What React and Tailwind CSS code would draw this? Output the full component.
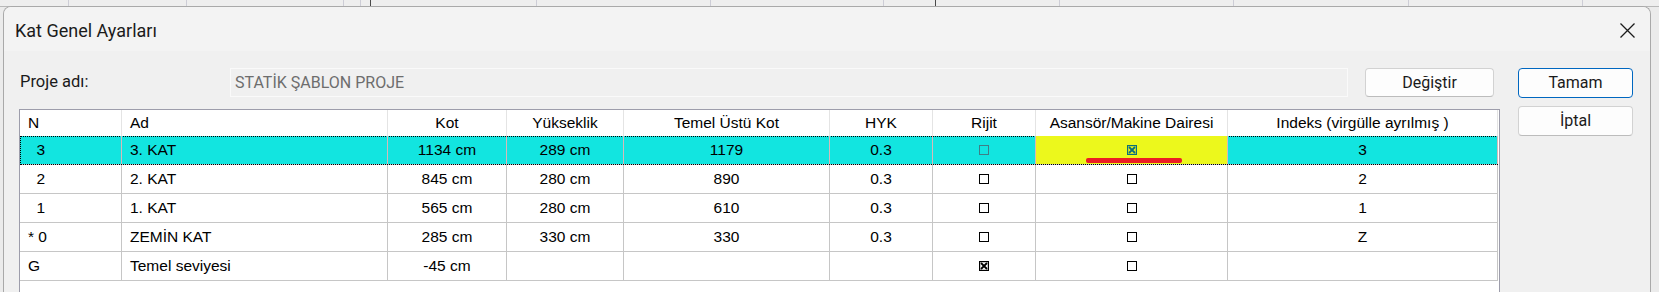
const columns = [
  { key: "n", label: "N", w: "w-[102px]", left: true },
  { key: "ad", label: "Ad", w: "w-[266px]", left: true },
  { key: "kot", label: "Kot", w: "w-[119px]" },
  { key: "yuk", label: "Yükseklik", w: "w-[117px]" },
  { key: "tuk", label: "Temel Üstü Kot", w: "w-[206px]" },
  { key: "hyk", label: "HYK", w: "w-[103px]" },
  { key: "rijit", label: "Rijit", w: "w-[103px]", box: true },
  { key: "asansor", label: "Asansör/Makine Dairesi", w: "w-[192px]", box: true },
  { key: "indeks", label: "Indeks (virgülle ayrılmış )", w: "w-[270px]" },
];

const rows = [
  { n: "  3", ad: "3. KAT", kot: "1134 cm", yuk: "289 cm", tuk: "1179", hyk: "0.3", rijit: false, asansor: true, indeks: "3", selected: true },
  { n: "  2", ad: "2. KAT", kot: "845 cm", yuk: "280 cm", tuk: "890", hyk: "0.3", rijit: false, asansor: false, indeks: "2" },
  { n: "  1", ad: "1. KAT", kot: "565 cm", yuk: "280 cm", tuk: "610", hyk: "0.3", rijit: false, asansor: false, indeks: "1" },
  { n: "* 0", ad: "ZEMİN KAT", kot: "285 cm", yuk: "330 cm", tuk: "330", hyk: "0.3", rijit: false, asansor: false, indeks: "Z" },
  { n: "G", ad: "Temel seviyesi", kot: "-45 cm", yuk: "", tuk: "", hyk: "", rijit: true, asansor: false, indeks: "" },
];

// background window columns peeking above the dialog
const strip = [
  { w: "w-[69px]" },
  { w: "w-[118px]" },
  { w: "w-[157px]" },
  { w: "w-[17px]" },
  { w: "w-[10px]", dark: true },
  { w: "w-[166px]" },
  { w: "w-[174px]" },
  { w: "w-[173px]" },
  { w: "w-[52px]", dark: true },
  { w: "w-[124px]" },
  { w: "w-[174px]" },
  { w: "w-[175px]" },
  { w: "w-[174px]" },
];

function CheckBox({ checked, color = "#000000" }) {
  return (
    <svg width="10" height="10" viewBox="0 0 10 10" className="block">
      <rect x="0.5" y="0.5" width="9" height="9" fill="none" stroke={color} strokeWidth={checked ? 1.4 : 1} />
      {checked && <path d="M2 2 L8 8 M8 2 L2 8" stroke={color} strokeWidth="1.8" />}
    </svg>
  );
}

function Cell({ col, row, header }) {
  if (header) {
    return (
      <div
        className={`${col.w} h-full shrink-0 flex items-center border-r border-[#e4e4e4] ${
          col.left ? "justify-start pl-[8px]" : "justify-center"
        }`}
      >
        {col.label}
      </div>
    );
  }

  const sel = row.selected;
  const yellow = sel && col.key === "asansor";

  return (
    <div
      className={`${col.w} relative h-full shrink-0 flex items-center border-r whitespace-pre ${
        sel ? "border-[#d6b9b9]" : "border-[#c6c6c6]"
      } ${yellow ? "bg-[#ecf81c]" : ""} ${col.left ? "justify-start pl-[8px]" : "justify-center"}`}
    >
      {col.box ? (
        <CheckBox
          checked={row[col.key]}
          color={sel ? (yellow ? "#0d6f7a" : "#3f7f86") : "#000000"}
        />
      ) : (
        row[col.key]
      )}
      {/* red marker under the elevator cell */}
      {yellow && (
        <div className="absolute bottom-[1px] left-[50px] w-[96px] h-[5px] rounded-[2px] bg-[#ec1c24]" />
      )}
    </div>
  );
}

export default function App() {
  return (
    <div className="w-[1659px] h-[292px] overflow-hidden bg-[#ebebeb] flex flex-col font-['Roboto',sans-serif] text-[#1a1a1a]">
      {/* Background strip */}
      <div className="h-[7px] shrink-0 flex border-b border-[#b8b8b8] bg-[#eeeeee]">
        {strip.map((s, i) => (
          <div
            key={i}
            className={`${s.w} h-full shrink-0 border-r ${s.dark ? "border-[#4a4a4a]" : "border-[#cdcdd6]"}`}
          />
        ))}
      </div>

      {/* Dialog */}
      <div className="ml-[3px] w-[1648px] flex-1 min-h-0 flex flex-col rounded-t-[8px] border border-b-0 border-[#a9a9a9] bg-[#f0f0f0] -mt-[1px] overflow-hidden">
        {/* Title bar */}
        <div className="h-[44px] shrink-0 bg-[#f3f3f3] flex items-center justify-between pl-[11px] pr-[15px] pt-[3px]">
          <p className="text-[18px] text-[#1b1b1b]">Kat Genel Ayarları</p>
          <svg width="15" height="15" viewBox="0 0 15 15" className="block">
            <path d="M0.5 0.5 L14.5 14.5 M14.5 0.5 L0.5 14.5" stroke="#1b1b1b" strokeWidth="1.3" />
          </svg>
        </div>

        {/* Body */}
        <div className="flex-1 min-h-0 flex gap-[18px] pl-[15px] pr-[17px] pt-[17px]">
          <div className="w-[1481px] shrink-0 flex flex-col gap-[12px] min-h-0">
            {/* Project name row */}
            <div className="h-[29px] shrink-0 flex items-center">
              <p className="w-[211px] shrink-0 pl-[1px] text-[16.5px]">Proje adı:</p>
              <div className="w-[1118px] h-full shrink-0 flex items-center pl-[4px] border border-[#fafafa] bg-[#f0f0f0] text-[16px] text-[#6d6d6d]">
                STATİK ŞABLON PROJE
              </div>
              <button className="ml-[17px] w-[129px] h-full shrink-0 rounded-[4px] border border-[#d2d2d2] border-b-[#bcbcbc] bg-[#fdfdfd] text-[16px]">
                Değiştir
              </button>
            </div>

            {/* Grid */}
            <div className="flex-1 min-h-0 border border-b-0 border-[#9d9dab] bg-white overflow-hidden font-['Liberation_Sans',sans-serif] text-[15.5px] text-black">
              <div className="h-[26px] flex">
                {columns.map((col) => (
                  <Cell key={col.key} col={col} header />
                ))}
              </div>
              {rows.map((row, i) => (
                <div
                  key={i}
                  className={`w-[1478px] h-[29px] flex border-b border-[#c6c6c6] ${
                    row.selected
                      ? "bg-[#12e5e0] outline-1 outline-dotted outline-black -outline-offset-1"
                      : ""
                  }`}
                >
                  {columns.map((col) => (
                    <Cell key={col.key} col={col} row={row} />
                  ))}
                </div>
              ))}
            </div>
          </div>

          {/* Dialog buttons */}
          <div className="w-[115px] shrink-0 flex flex-col gap-[8px]">
            <button className="h-[30px] rounded-[4px] border border-[#0067c0] bg-[#fdfdfd] text-[16px]">
              Tamam
            </button>
            <button className="h-[30px] rounded-[4px] border border-[#d2d2d2] border-b-[#bcbcbc] bg-[#fdfdfd] text-[16px]">
              İptal
            </button>
          </div>
        </div>
      </div>
    </div>
  );
}
